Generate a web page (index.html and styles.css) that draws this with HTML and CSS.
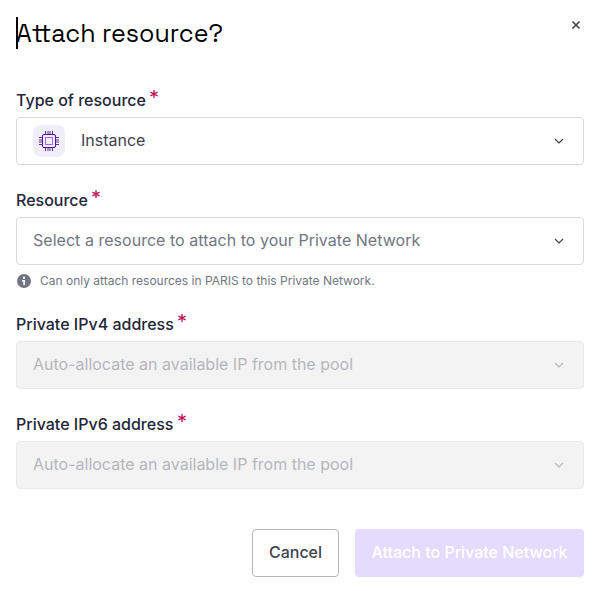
FILE: index.html
```html
<!DOCTYPE html>
<html lang="en">
<head>
<meta charset="utf-8">
<title>Attach resource</title>
<link rel="stylesheet" href="styles.css">
</head>
<body>
<main class="dialog">
  <header class="header">
    <h1 class="title">Attach resource?</h1>
    <button class="close" aria-label="Close"><svg width="10" height="10" viewBox="0 0 10 10"><path d="M1.5 1.5l7 7M8.5 1.5l-7 7"/></svg></button>
  </header>
  <form class="form">
    <div class="field">
      <div class="label">Type of resource<svg class="star" viewBox="0 0 8 8"><path d="M4 0v8M.4 2.1l7.2 3.8M7.6 2.1L.4 5.9"/></svg></div>
      <div class="select selected">
        <span class="tile"><svg width="20" height="20" viewBox="0 0 20 20"><path class="pins" d="M6.5 0v3M9 0v3M11 0v3M13.5 0v3M6.5 17v3M9 17v3M11 17v3M13.5 17v3M0 6.5h3M0 9h3M0 11h3M0 13.5h3M17 6.5h3M17 9h3M17 11h3M17 13.5h3"/><rect class="chip" x="3.5" y="3.5" width="13" height="13" rx="1.5"/><rect class="core" x="6.5" y="6.5" width="7" height="7"/></svg></span>
        <span class="value">Instance</span>
        <svg class="chevron" viewBox="0 0 10 6"><path d="M1 1l4 4 4-4"/></svg>
      </div>
    </div>
    <div class="field">
      <div class="label">Resource<svg class="star" viewBox="0 0 8 8"><path d="M4 0v8M.4 2.1l7.2 3.8M7.6 2.1L.4 5.9"/></svg></div>
      <div class="select prompt">
        <span class="value">Select a resource to attach to your Private Network</span>
        <svg class="chevron" viewBox="0 0 10 6"><path d="M1 1l4 4 4-4"/></svg>
      </div>
      <div class="helper"><svg width="14" height="14" viewBox="0 0 14 14"><circle cx="7" cy="7" r="7"/><path d="M6 2.8h2v2H6zM5 6h3v5H6.3V7.6H5z"/></svg><span>Can only attach resources in PARIS to this Private Network.</span></div>
    </div>
    <div class="field">
      <div class="label">Private IPv4 address<svg class="star" viewBox="0 0 8 8"><path d="M4 0v8M.4 2.1l7.2 3.8M7.6 2.1L.4 5.9"/></svg></div>
      <div class="select disabled">
        <span class="value">Auto-allocate an available IP from the pool</span>
        <svg class="chevron" viewBox="0 0 10 6"><path d="M1 1l4 4 4-4"/></svg>
      </div>
    </div>
    <div class="field">
      <div class="label">Private IPv6 address<svg class="star" viewBox="0 0 8 8"><path d="M4 0v8M.4 2.1l7.2 3.8M7.6 2.1L.4 5.9"/></svg></div>
      <div class="select disabled">
        <span class="value">Auto-allocate an available IP from the pool</span>
        <svg class="chevron" viewBox="0 0 10 6"><path d="M1 1l4 4 4-4"/></svg>
      </div>
    </div>
  </form>
  <footer class="actions">
    <button class="button cancel">Cancel</button>
    <button class="button submit" disabled>Attach to Private Network</button>
  </footer>
</main>
</body>
</html>
```
FILE: styles.css
```css
* { box-sizing: border-box; }
body { margin: 0; background: #fff; font-family: Inter, sans-serif; font-size: 16px; line-height: 24px; color: #3f4250; }
svg { display: block; flex: none; fill: none; }
.dialog { padding: 17px 13px 14px 16px; }
.header { display: flex; justify-content: space-between; height: 71px; }
.title { margin: 0; height: 32px; border-left: 2px solid #000; font-family: "Space Grotesk", Inter, sans-serif; font-size: 25px; font-weight: 400; line-height: 32px; text-indent: -2px; white-space: nowrap; color: #000; }
.close { display: flex; align-items: center; justify-content: center; width: 16px; height: 16px; padding: 0; border: 0; background: none; }
.close svg { stroke: #3f4250; stroke-width: 1.6; }
.form { display: flex; flex-direction: column; gap: 23px; }
.field { display: flex; flex-direction: column; }
.label { display: flex; align-items: flex-start; gap: 4.5px; height: 29px; font-weight: 500; color: #222638; white-space: nowrap; }
.star { width: 8px; height: 8px; margin-top: 2px; stroke: #bd1850; stroke-width: 1.35; }
.select { display: flex; align-items: center; width: 568px; height: 48px; padding: 0 19px 0 16px; border: 1px solid #d9dadd; border-radius: 4px; color: #727683; white-space: nowrap; }
.value { padding-bottom: 2px; }
.prompt .value { letter-spacing: .03px; }
.selected { color: #3f4250; }
.disabled { background: #f3f3f4; border-color: #e9eaeb; color: #b5b7bd; }
.tile { display: flex; align-items: center; justify-content: center; width: 32px; height: 32px; margin-right: 16px; border-radius: 8px; background: #f1eefc; }
.pins { stroke: #521094; stroke-width: 0.9; }
.chip { stroke: #521094; stroke-width: 1; }
.core { stroke: #a365ff; stroke-width: 1; }
.chevron { width: 10px; height: 6px; margin-left: auto; stroke: #3f4250; stroke-width: 1.2; }
.disabled .chevron { stroke: #b5b7bd; }
.helper { display: flex; align-items: center; gap: 9px; height: 16px; margin-top: 8px; padding-left: 1px; font-size: 12px; line-height: 16px; color: #727683; }
.helper circle { fill: #727683; }
.helper path { fill: #fff; }
.actions { display: flex; justify-content: flex-end; gap: 16px; width: 568px; margin-top: 40px; }
.button { height: 48px; padding: 0 0 2px; border: 0; border-radius: 4px; font: 500 16px/24px Inter, sans-serif; white-space: nowrap; }
.cancel { width: 87px; border: 1px solid #b5b7bd; background: #fff; color: #3f4250; }
.submit { width: 229px; background: #e5dbfd; color: #fff; }
```
